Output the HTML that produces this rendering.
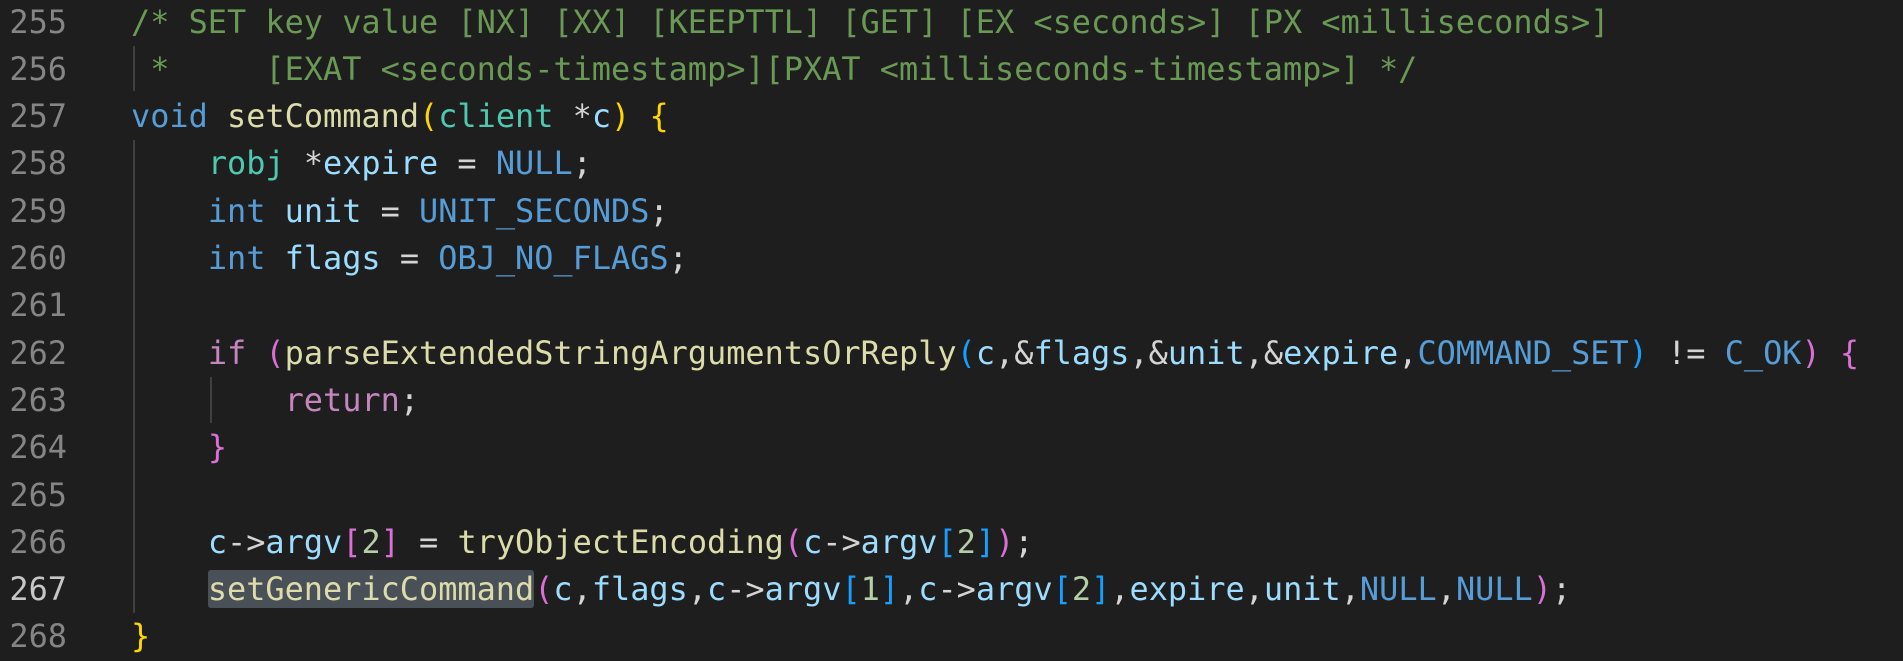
<!DOCTYPE html>
<html><head><meta charset="utf-8"><style>
html,body{margin:0;padding:0;background:#1e1e1e;width:1903px;height:661px;overflow:hidden}
.l{position:absolute;left:0;height:47.3px;line-height:47.3px;font-family:"DejaVu Sans Mono","Liberation Mono",monospace;font-size:31.9px;white-space:pre;color:#d4d4d4}
.n{position:absolute;left:0;width:67px;text-align:right;color:#858585}
.c{position:absolute;left:131px}
.cm{color:#6a9955}.k{color:#569cd6}.f{color:#dcdcaa}.t{color:#4ec9b0}.v{color:#9cdcfe}.cn{color:#4fc1ff}.p{color:#c586c0}.num{color:#b5cea8}
.b1{color:#ffd700}.b2{color:#da70d6}.b3{color:#179fff}
.g{position:absolute;width:2px;background:#404040}
.hl{background:#4a5058;border-radius:3px}
</style></head><body>
<div class="g" style="left:133px;top:46px;height:45px"></div>
<div class="g" style="left:133px;top:140px;height:473px"></div>
<div class="g" style="left:210px;top:377px;height:46px"></div>
<div class="l" style="top:-1.5px"><span class="n">255</span><span class="c cm">/* SET key value [NX] [XX] [KEEPTTL] [GET] [EX &lt;seconds&gt;] [PX &lt;milliseconds&gt;]</span></div>
<div class="l" style="top:45.8px"><span class="n">256</span><span class="c cm"> *     [EXAT &lt;seconds-timestamp&gt;][PXAT &lt;milliseconds-timestamp&gt;] */</span></div>
<div class="l" style="top:93.1px"><span class="n">257</span><span class="c"><span class="k">void</span> <span class="f">setCommand</span><span class="b1">(</span><span class="t">client</span> *<span class="v">c</span><span class="b1">)</span> <span class="b1">{</span></span></div>
<div class="l" style="top:140.4px"><span class="n">258</span><span class="c">    <span class="t">robj</span> *<span class="v">expire</span> = <span class="k">NULL</span>;</span></div>
<div class="l" style="top:187.7px"><span class="n">259</span><span class="c">    <span class="k">int</span> <span class="v">unit</span> = <span class="k">UNIT_SECONDS</span>;</span></div>
<div class="l" style="top:235px"><span class="n">260</span><span class="c">    <span class="k">int</span> <span class="v">flags</span> = <span class="k">OBJ_NO_FLAGS</span>;</span></div>
<div class="l" style="top:282.3px"><span class="n">261</span></div>
<div class="l" style="top:329.6px"><span class="n">262</span><span class="c">    <span class="p">if</span> <span class="b2">(</span><span class="f">parseExtendedStringArgumentsOrReply</span><span class="b3">(</span><span class="v">c</span>,&amp;<span class="v">flags</span>,&amp;<span class="v">unit</span>,&amp;<span class="v">expire</span>,<span class="k">COMMAND_SET</span><span class="b3">)</span> != <span class="k">C_OK</span><span class="b2">)</span> <span class="b2">{</span></span></div>
<div class="l" style="top:376.9px"><span class="n">263</span><span class="c">        <span class="p">return</span>;</span></div>
<div class="l" style="top:424.2px"><span class="n">264</span><span class="c">    <span class="b2">}</span></span></div>
<div class="l" style="top:471.5px"><span class="n">265</span></div>
<div class="l" style="top:518.8px"><span class="n">266</span><span class="c">    <span class="v">c</span>-&gt;<span class="v">argv</span><span class="b2">[</span><span class="num">2</span><span class="b2">]</span> = <span class="f">tryObjectEncoding</span><span class="b2">(</span><span class="v">c</span>-&gt;<span class="v">argv</span><span class="b3">[</span><span class="num">2</span><span class="b3">]</span><span class="b2">)</span>;</span></div>
<div class="l" style="top:566.1px"><span class="n" style="color:#c6c6c6">267</span><span class="c">    <span class="f hl">setGenericCommand</span><span class="b2">(</span><span class="v">c</span>,<span class="v">flags</span>,<span class="v">c</span>-&gt;<span class="v">argv</span><span class="b3">[</span><span class="num">1</span><span class="b3">]</span>,<span class="v">c</span>-&gt;<span class="v">argv</span><span class="b3">[</span><span class="num">2</span><span class="b3">]</span>,<span class="v">expire</span>,<span class="v">unit</span>,<span class="k">NULL</span>,<span class="k">NULL</span><span class="b2">)</span>;</span></div>
<div class="l" style="top:613.4px"><span class="n">268</span><span class="c"><span class="b1">}</span></span></div>
</body></html>
